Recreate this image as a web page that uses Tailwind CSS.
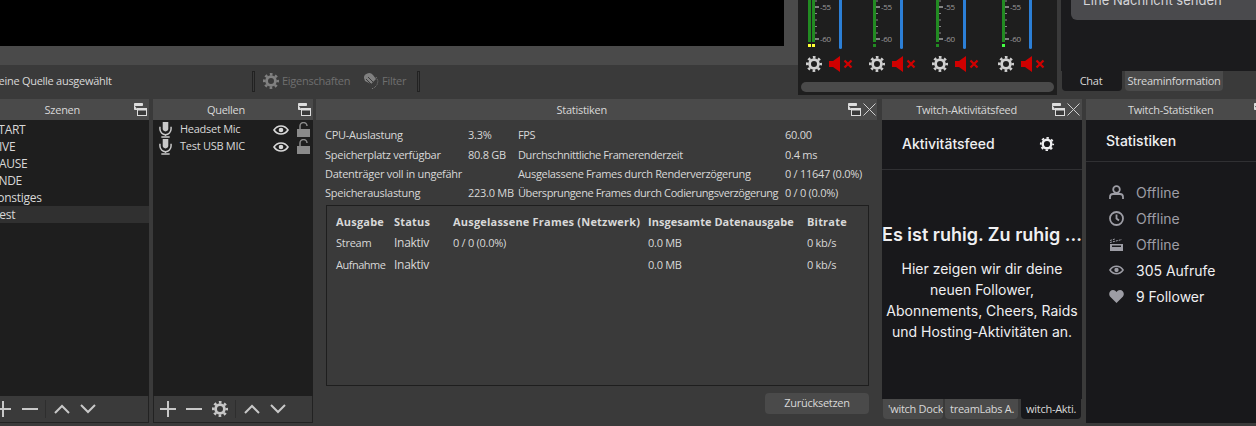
<!DOCTYPE html>
<html lang="de">
<head>
  <meta charset="UTF-8">
  <script src="https://cdn.jsdelivr.net/npm/@tailwindcss/browser@4"></script>
  <title>OBS Studio</title>
</head>
<body class="bg-[#3a3a3a] font-['Open_Sans',sans-serif] text-[11px] tracking-[-0.27px] text-[#d8d8d8]">

  <!-- shared icons -->
  <svg class="hidden">
    <symbol id="gear" viewBox="0 0 16 16">
      <circle cx="8" cy="8" r="4.4" fill="none" stroke="currentColor" stroke-width="2.8"/>
      <circle cx="8" cy="8" r="6.7" fill="none" stroke="currentColor" stroke-width="2.6" stroke-dasharray="2.63 2.63" stroke-dashoffset="1.31"/>
    </symbol>
    <symbol id="gear-thin" viewBox="0 0 16 16">
      <circle cx="8" cy="8" r="4.3" fill="none" stroke="currentColor" stroke-width="2.4"/>
      <circle cx="8" cy="8" r="6.2" fill="none" stroke="currentColor" stroke-width="1.8" stroke-dasharray="2.43 2.43" stroke-dashoffset="1.21"/>
    </symbol>
    <symbol id="mute" viewBox="0 0 24 16">
      <path d="M0 5h4l7-5v16l-7-5H0z" fill="#d00000"/>
      <path d="M15.500 4.500l7 7M22.500 4.500l-7 7" stroke="#d00000" stroke-width="2.200" fill="none"/>
    </symbol>
    <symbol id="mic" viewBox="0 0 14 17">
      <path d="M4 0h6v7a3 3 0 0 1-6 0z" fill="currentColor"/>
      <path d="M1 5v2.500a6 6 0 0 0 12 0V5M7 13.500V15M2.500 16h9" fill="none" stroke="currentColor" stroke-width="1.600"/>
    </symbol>
    <symbol id="eye" viewBox="0 0 16 10">
      <path d="M1 5c3.500-5.300 10.500-5.300 14 0-3.500 5.300-10.500 5.300-14 0z" fill="none" stroke="currentColor" stroke-width="1.600"/>
      <circle cx="8" cy="5" r="2.300" fill="currentColor"/>
    </symbol>
    <symbol id="lock" viewBox="0 0 13 15">
      <path d="M3 7V4a3.500 3.500 0 0 1 7 0" fill="none" stroke="currentColor" stroke-width="1.500"/>
      <rect x="0" y="7" width="13" height="8" fill="currentColor"/>
    </symbol>
    <symbol id="float" viewBox="0 0 13 13">
      <path d="M.5.500h8v2h-8zM.500 2.500v4h3" fill="#ddd" stroke="#ddd" stroke-width="1"/>
      <rect x="3.500" y="5.500" width="9" height="7" fill="#3a3a3a" stroke="#ddd"/>
      <path d="M3.500 6.500h9" stroke="#ddd" stroke-width="2"/>
    </symbol>
    <symbol id="close" viewBox="0 0 13 13">
      <path d="M.5.500l12 12M12.500.500l-12 12" stroke="#cfcfcf" fill="none"/>
    </symbol>
    <symbol id="plus" viewBox="0 0 16 16"><path d="M8 0v16M0 8h16" stroke="currentColor" stroke-width="2"/></symbol>
    <symbol id="minus" viewBox="0 0 16 16"><path d="M0 8h16" stroke="currentColor" stroke-width="2"/></symbol>
    <symbol id="up" viewBox="0 0 16 10"><path d="M1 9l7-7 7 7" stroke="currentColor" stroke-width="2" fill="none"/></symbol>
    <symbol id="down" viewBox="0 0 16 10"><path d="M1 1l7 7 7-7" stroke="currentColor" stroke-width="2" fill="none"/></symbol>
    <symbol id="ticks" viewBox="0 0 4 44">
      <path d="M0 7h4M0 39h4" stroke="#e8e8e8"/>
      <path d="M0 1h2M0 13.500h2M0 20h2M0 26.500h2M0 33h2" stroke="#888"/>
    </symbol>
  </svg>

  <div class="w-[1256px] h-[426px] overflow-hidden flex flex-col">

    <!-- top area -->
    <div class="h-[99px] flex shrink-0">
      <div class="w-[798px] shrink-0 flex flex-col">
        <div class="h-[65px] bg-[#4a4a4a]">
          <div class="w-[784px] h-[46px] bg-black"></div>
        </div>
        <div class="h-[34px] flex items-center text-[11px]">
          <div class="w-[252px] -indent-[7px] overflow-hidden whitespace-nowrap pb-[2px]">keine Quelle ausgewählt</div>
          <div class="w-[3px] h-[21px] border border-[#222] bg-[#3a3a3a] mb-[2px]"></div>
          <div class="flex items-center text-[#6f6f6f] pb-[2px]">
            <svg class="w-[16px] h-[16px] ml-[8px] text-[#808080]"><use href="#gear"/></svg>
            <span class="ml-[3px] w-[81px]">Eigenschaften</span>
            <svg class="w-[16px] h-[16px] text-[#808080]" viewBox="0 0 16 16">
              <path d="M1 5a5 4.500 0 0 1 9-3l3 4-5 5-6-3z" fill="currentColor"/>
              <path d="M3 6l5 5M5 4l6 6" stroke="#3a3a3a" fill="none"/>
              <path d="M13 4l2 4-1 4-3 3-3 1" stroke="currentColor" stroke-dasharray="1 1" fill="none"/>
            </svg>
            <span class="ml-[3px] w-[35px]">Filter</span>
          </div>
          <div class="w-[3px] h-[21px] border border-[#222] bg-[#3a3a3a] mb-[2px]"></div>
        </div>
      </div>

      <!-- audio mixer -->
      <div class="w-[259px] h-[95px] shrink-0 bg-[#1e1e1e] flex flex-col">
        <div class="h-[80px] flex pl-[8px]">
          <div class="w-[63px] shrink-0 flex flex-col">
            <div class="h-[49px] flex pl-[2px]">
              <div class="w-[7px] flex flex-col">
                <div class="h-[42px] flex gap-[1px]"><div class="w-[3px] bg-[#228b22]"></div><div class="w-[3px] bg-[#228b22]"></div></div>
                <div class="h-[3px] mt-[2px] flex gap-[1px]"><div class="w-[3px] bg-[#ffff33]"></div><div class="w-[3px] bg-[#ffff33]"></div></div>
              </div>
              <svg class="w-[4px] h-[44px]"><use href="#ticks"/></svg>
              <div class="w-[20px] text-[8px] leading-none text-[#9a9a9a] pl-[1px]"><div class="pt-[3px]">-55</div><div class="pt-[24px]">-60</div></div>
              <div class="w-[3px] rounded-b-sm bg-[#2c7fd6]"></div>
            </div>
            <div class="flex items-center mt-[7px] text-[#d0d0d0]"><svg class="w-[16px] h-[16px]"><use href="#gear"/></svg><svg class="w-[24px] h-[16px] ml-[7px]"><use href="#mute"/></svg></div>
          </div>
          <div class="w-[63px] shrink-0 flex flex-col">
            <div class="h-[49px] flex pl-[4px]">
              <div class="w-[3px] flex flex-col">
                <div class="h-[42px] bg-[#228b22]"></div>
                <div class="h-[3px] mt-[2px] bg-[#228b22]"></div>
              </div>
              <svg class="w-[4px] h-[44px]"><use href="#ticks"/></svg>
              <div class="w-[20px] text-[8px] leading-none text-[#9a9a9a] pl-[1px]"><div class="pt-[3px]">-55</div><div class="pt-[24px]">-60</div></div>
              <div class="w-[3px] rounded-b-sm bg-[#2c7fd6]"></div>
            </div>
            <div class="flex items-center mt-[7px] text-[#d0d0d0]"><svg class="w-[16px] h-[16px]"><use href="#gear"/></svg><svg class="w-[24px] h-[16px] ml-[7px]"><use href="#mute"/></svg></div>
          </div>
          <div class="w-[66px] shrink-0 flex flex-col">
            <div class="h-[49px] flex pl-[4px]">
              <div class="w-[3px] flex flex-col">
                <div class="h-[42px] bg-[#228b22]"></div>
                <div class="h-[3px] mt-[2px] bg-[#228b22]"></div>
              </div>
              <svg class="w-[4px] h-[44px]"><use href="#ticks"/></svg>
              <div class="w-[20px] text-[8px] leading-none text-[#9a9a9a] pl-[1px]"><div class="pt-[3px]">-55</div><div class="pt-[24px]">-60</div></div>
              <div class="w-[3px] rounded-b-sm bg-[#2c7fd6]"></div>
            </div>
            <div class="flex items-center mt-[7px] text-[#d0d0d0]"><svg class="w-[16px] h-[16px]"><use href="#gear"/></svg><svg class="w-[24px] h-[16px] ml-[7px]"><use href="#mute"/></svg></div>
          </div>
          <div class="w-[50px] shrink-0 flex flex-col">
            <div class="h-[49px] flex pl-[4px]">
              <div class="w-[3px] flex flex-col">
                <div class="h-[42px] bg-[#228b22]"></div>
                <div class="h-[3px] mt-[2px] bg-[#44ff44]"></div>
              </div>
              <svg class="w-[4px] h-[44px]"><use href="#ticks"/></svg>
              <div class="w-[20px] text-[8px] leading-none text-[#9a9a9a] pl-[1px]"><div class="pt-[3px]">-55</div><div class="pt-[24px]">-60</div></div>
              <div class="w-[3px] rounded-b-sm bg-[#2c7fd6]"></div>
            </div>
            <div class="flex items-center mt-[7px] text-[#d0d0d0]"><svg class="w-[16px] h-[16px]"><use href="#gear"/></svg><svg class="w-[24px] h-[16px] ml-[7px]"><use href="#mute"/></svg></div>
          </div>
        </div>
        <div class="h-[10px] mx-[3px] mt-[2px] rounded-full bg-[#4a4a4a]"></div>
      </div>

      <!-- chat -->
      <div class="ml-[4px] flex-1 flex flex-col">
        <div class="h-[71px] bg-[#1b1b1d] pl-[10px]">
          <div class="h-[20px] bg-[#4a4a4d] rounded-bl-md overflow-hidden pl-[12px] font-['Inter',sans-serif] text-[13px] tracking-normal text-[#d4d4d8] leading-none"><div class="-mt-[6px]">Eine Nachricht senden</div></div>
        </div>
        <div class="flex h-[20px] text-[11px]">
          <div class="w-[60px] ml-[1px] bg-[#1b1b1d] rounded-b flex items-center justify-center pr-[2px]">Chat</div>
          <div class="w-[98px] ml-[3px] bg-[#4a4a4a] rounded-b flex items-center justify-center">Streaminformation</div>
        </div>
      </div>
    </div>

    <!-- docks -->
    <div class="flex-1 flex items-start">

      <!-- Szenen -->
      <div class="w-[149px] shrink-0 flex flex-col">
        <div class="h-[21px] bg-[#4a4a4a] flex items-center justify-end pr-[2px]">
          <span class="mr-[54px] pt-[2px]">Szenen</span>
          <svg class="w-[13px] h-[13px]"><use href="#float"/></svg>
        </div>
        <div class="h-[276px] bg-[#1e1e1e] pt-[1px] text-[12px] leading-[17px] overflow-hidden whitespace-nowrap">
          <div class="h-[17px] -ml-[8px]">START</div>
          <div class="h-[17px] -ml-[7px]">LIVE</div>
          <div class="h-[17px] -ml-[8px]">PAUSE</div>
          <div class="h-[17px] -ml-[8px]">ENDE</div>
          <div class="h-[17px] -ml-[9px]">Sonstiges</div>
          <div class="h-[17px] -ml-[7px] bg-[#303030]">Test</div>
        </div>
        <div class="h-[27px] bg-[#3a3a3a] border-r border-b border-[#222] flex items-center text-[#c8c8c8]">
          <svg class="w-[16px] h-[16px] -ml-[5px]"><use href="#plus"/></svg>
          <svg class="w-[16px] h-[16px] ml-[11px]"><use href="#minus"/></svg>
          <div class="w-px h-[18px] bg-[#2e2e2e] ml-[7px]"></div>
          <svg class="w-[16px] h-[10px] ml-[8px]"><use href="#up"/></svg>
          <svg class="w-[16px] h-[10px] ml-[10px]"><use href="#down"/></svg>
        </div>
      </div>

      <!-- Quellen -->
      <div class="w-[160px] ml-[4px] shrink-0 flex flex-col">
        <div class="h-[21px] bg-[#4a4a4a] flex items-center justify-end pr-[2px]">
          <span class="mr-[53px] pt-[2px]">Quellen</span>
          <svg class="w-[13px] h-[13px]"><use href="#float"/></svg>
        </div>
        <div class="h-[276px] bg-[#1e1e1e] pt-[1px]">
          <div class="h-[17px] flex items-center pl-[6px]">
            <svg class="w-[13px] h-[16px] text-[#c8c8c8]"><use href="#mic"/></svg>
            <span class="ml-[8px] w-[93px]">Headset Mic</span>
            <svg class="w-[16px] h-[10px] text-[#d8d8d8]"><use href="#eye"/></svg>
            <svg class="w-[13px] h-[15px] ml-[8px] text-[#8a8a8a]"><use href="#lock"/></svg>
          </div>
          <div class="h-[17px] flex items-center pl-[6px]">
            <svg class="w-[13px] h-[16px] text-[#c8c8c8]"><use href="#mic"/></svg>
            <span class="ml-[8px] w-[93px]">Test USB MIC</span>
            <svg class="w-[16px] h-[10px] text-[#d8d8d8]"><use href="#eye"/></svg>
            <svg class="w-[13px] h-[15px] ml-[8px] text-[#8a8a8a]"><use href="#lock"/></svg>
          </div>
        </div>
        <div class="h-[27px] bg-[#3a3a3a] border border-t-0 border-[#222] flex items-center text-[#c8c8c8]">
          <svg class="w-[16px] h-[16px] ml-[6px]"><use href="#plus"/></svg>
          <svg class="w-[16px] h-[16px] ml-[10px]"><use href="#minus"/></svg>
          <svg class="w-[16px] h-[16px] ml-[10px]"><use href="#gear"/></svg>
          <div class="w-px h-[18px] bg-[#2e2e2e] ml-[7px]"></div>
          <svg class="w-[16px] h-[10px] ml-[8px]"><use href="#up"/></svg>
          <svg class="w-[16px] h-[10px] ml-[10px]"><use href="#down"/></svg>
        </div>
      </div>

      <!-- Statistiken -->
      <div class="w-[561px] ml-[3px] shrink-0 flex flex-col">
        <div class="h-[21px] bg-[#4a4a4a] flex items-center justify-end pr-[1px]">
          <span class="mr-[241px] pt-[2px]">Statistiken</span>
          <svg class="w-[13px] h-[13px]"><use href="#float"/></svg>
          <svg class="w-[13px] h-[13px] ml-[2px]"><use href="#close"/></svg>
        </div>
        <div class="grid grid-cols-[143px_50px_267px_auto] auto-rows-[19.300px] items-center pl-[9px] pt-[6px] whitespace-nowrap">
          <div>CPU-Auslastung</div><div>3.3%</div><div class="tracking-[-0.4px]">FPS</div><div>60.00</div>
          <div>Speicherplatz verfügbar</div><div>80.8 GB</div><div class="tracking-[-0.4px]">Durchschnittliche Framerenderzeit</div><div>0.4 ms</div>
          <div>Datenträger voll in ungefähr</div><div></div><div class="tracking-[-0.34px]">Ausgelassene Frames durch Renderverzögerung</div><div>0 / 11647 (0.0%)</div>
          <div>Speicherauslastung</div><div>223.0 MB</div><div class="tracking-[-0.4px]">Übersprungene Frames durch Codierungsverzögerung</div><div>0 / 0 (0.0%)</div>
        </div>
        <div class="ml-[10px] mt-[2px] w-[543px] h-[181px] border border-[#1e1e1e] pl-[9px] pt-[5px] grid grid-cols-[58px_59px_195px_159px_auto] auto-rows-[21.500px] items-center whitespace-nowrap">
          <div class="font-bold tracking-[0.2px]">Ausgabe</div><div class="font-bold tracking-[0.2px]">Status</div><div class="font-bold tracking-[0.2px]">Ausgelassene Frames (Netzwerk)</div><div class="font-bold tracking-[0.03px]">Insgesamte Datenausgabe</div><div class="font-bold tracking-[0.2px]">Bitrate</div>
          <div>Stream</div><div class="text-[12px]">Inaktiv</div><div>0 / 0 (0.0%)</div><div>0.0 MB</div><div>0 kb/s</div>
          <div class="tracking-[-0.5px]">Aufnahme</div><div class="text-[12px]">Inaktiv</div><div></div><div>0.0 MB</div><div>0 kb/s</div>
        </div>
        <div class="ml-[449px] mt-[7px] w-[104px] h-[21px] rounded bg-[#4a4a4a] flex items-center justify-center">Zurücksetzen</div>
      </div>

      <!-- Twitch-Aktivitätsfeed -->
      <div class="w-[200px] ml-[5px] shrink-0 flex flex-col">
        <div class="h-[21px] bg-[#4a4a4a] flex items-center justify-end pr-[2px]">
          <span class="mr-[35px] pt-[2px]">Twitch-Aktivitätsfeed</span>
          <svg class="w-[13px] h-[13px]"><use href="#float"/></svg>
          <svg class="w-[13px] h-[13px] ml-[2px]"><use href="#close"/></svg>
        </div>
        <div class="h-[279px] bg-[#18181b] font-['Inter',sans-serif] tracking-normal text-[#efeff1] flex flex-col">
          <div class="h-[50px] border-b border-[#303033] flex items-center pl-[20px] pb-[2px] text-[14px] font-medium">
            <span class="w-[137px]">Aktivitätsfeed</span>
            <svg class="w-[16px] h-[16px]"><use href="#gear-thin"/></svg>
          </div>
          <div class="text-center whitespace-nowrap text-[18px] font-semibold mt-[53px] leading-[24px]">Es ist ruhig. Zu ruhig ...</div>
          <div class="text-center text-[14px] leading-[21px] mt-[11px] px-[2px]">Hier zeigen wir dir deine<br>neuen Follower,<br>Abonnements, Cheers, Raids<br>und Hosting-Aktivitäten an.</div>
        </div>
        <div class="flex h-[20px] text-[11px] whitespace-nowrap">
          <div class="w-[60px] ml-[1px] bg-[#4a4a4a] rounded-b overflow-hidden pl-[5px] pt-[2px]">'witch Dock</div>
          <div class="w-[73px] ml-[2px] bg-[#4a4a4a] rounded-b overflow-hidden pl-[5px] pt-[2px]">treamLabs A.</div>
          <div class="w-[60px] ml-[3px] bg-[#18181b] rounded-b overflow-hidden pl-[5px] pt-[2px]">witch-Akti.</div>
        </div>
      </div>

      <!-- Twitch-Statistiken -->
      <div class="w-[170px] ml-[4px] shrink-0 flex flex-col">
        <div class="h-[21px] bg-[#4a4a4a] flex items-center justify-between pl-[42px]">
          <span class="pt-[2px]">Twitch-Statistiken</span>
          <svg class="w-[13px] h-[13px] -mr-[11px]"><use href="#float"/></svg>
        </div>
        <div class="h-[303px] bg-[#18181b] font-['Inter',sans-serif] tracking-normal text-[14px] text-[#efeff1]">
          <div class="h-[42px] border-b border-[#303033] flex items-center pl-[20px] font-medium">Statistiken</div>
          <div class="pt-[17px] pl-[23px] flex flex-col">
            <div class="h-[26px] flex items-center text-[#9d9da5]">
              <svg class="w-[15px] h-[15px]" viewBox="0 0 15 15" fill="none" stroke="currentColor" stroke-width="1.800"><circle cx="7.500" cy="4.500" r="3.300"/><path d="M1 14v-2a3 3 0 0 1 3-3h7a3 3 0 0 1 3 3v2"/></svg>
              <span class="ml-[12px]">Offline</span>
            </div>
            <div class="h-[26px] flex items-center text-[#9d9da5]">
              <svg class="w-[15px] h-[15px]" viewBox="0 0 15 15" fill="none" stroke="currentColor" stroke-width="1.800"><circle cx="7.500" cy="7.500" r="6.500"/><path d="M7.500 3.500v4l2.500 2"/></svg>
              <span class="ml-[12px]">Offline</span>
            </div>
            <div class="h-[26px] flex items-center text-[#9d9da5]">
              <svg class="w-[15px] h-[15px]" viewBox="0 0 15 15" fill="currentColor"><path d="M1 7h13v7H1zM3 8.500v1.500h9V8.500z" fill-rule="evenodd"/><path d="M1 5.500l12-3M1 3.500l5-1.500" stroke="currentColor" stroke-dasharray="2 1" fill="none"/></svg>
              <span class="ml-[12px]">Offline</span>
            </div>
            <div class="h-[26px] flex items-center">
              <svg class="w-[15px] h-[10px] text-[#9d9da5]"><use href="#eye"/></svg>
              <span class="ml-[12px]">305 Aufrufe</span>
            </div>
            <div class="h-[26px] flex items-center">
              <svg class="w-[15px] h-[14px] text-[#9d9da5]" viewBox="0 0 15 14" fill="currentColor"><path d="M7.500 14L1 7.500C-1 4.500 1 1 4 1c1.500 0 2.700.8 3.500 2C8.300 1.800 9.500 1 11 1c3 0 5 3.500 3 6.500z"/></svg>
              <span class="ml-[12px]">9 Follower</span>
            </div>
          </div>
        </div>
      </div>
    </div>
  </div>
</body>
</html>
